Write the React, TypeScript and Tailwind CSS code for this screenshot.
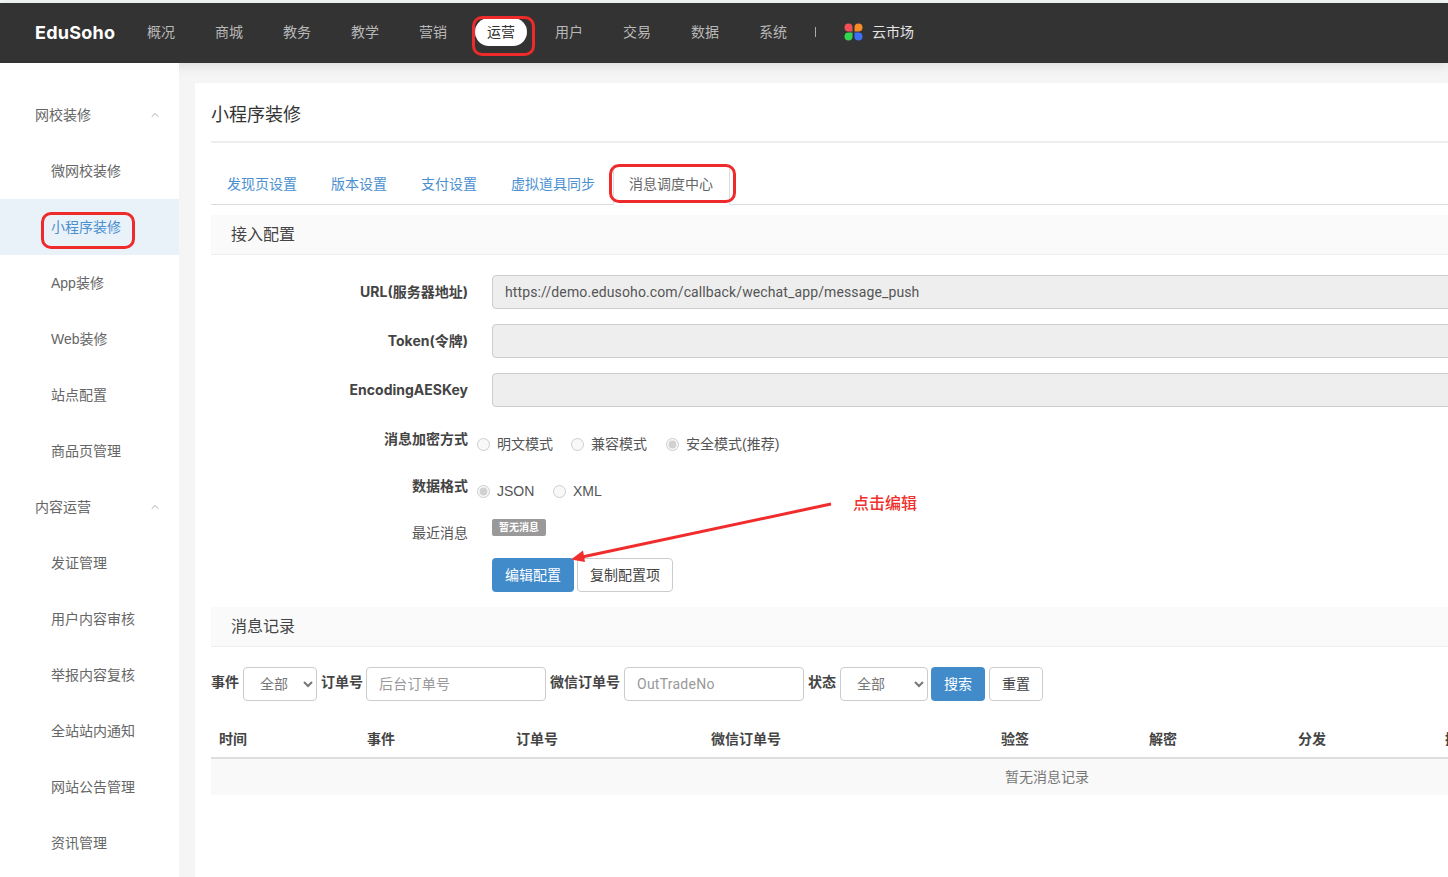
import React from 'react';
import { ChevronUp } from 'lucide-react';

const FONT = { fontFamily: '"Liberation Sans", "Noto Sans CJK SC", sans-serif' };

const navItems = ['概况', '商城', '教务', '教学', '营销', '运营', '用户', '交易', '数据', '系统'];

const sideGroups = [
  { title: '网校装修', items: ['微网校装修', '小程序装修', 'App装修', 'Web装修', '站点配置', '商品页管理'] },
  { title: '内容运营', items: ['发证管理', '用户内容审核', '举报内容复核', '全站站内通知', '网站公告管理', '资讯管理'] },
];

const tabs = ['发现页设置', '版本设置', '支付设置', '虚拟道具同步'];

const TopNav: React.FC = () => (
  <header className="flex h-[60px] items-center bg-[#333333] pb-[2px] pl-[35px] shadow-[0_2px_12px_rgba(0,0,0,0.12)]">
    <span className="w-[92px] font-['Inter',sans-serif] text-[18px] font-bold tracking-[0.25px] text-white">EduSoho</span>
    <nav className="flex items-center">
      {navItems.map((item) => (
        <span
          key={item}
          className={
            item === '运营'
              ? 'mx-[8px] flex h-[28px] w-[52px] items-center justify-center rounded-full bg-white text-[14px] text-[#333333]'
              : 'mx-[8px] flex h-[28px] w-[52px] items-center justify-center text-[14px] text-[#b8b8b8]'
          }
        >
          {item}
        </span>
      ))}
    </nav>
    <span className="ml-[8px] h-[10px] w-px bg-[#aaaaaa]" />
    <svg className="ml-[28px]" width="19" height="18" viewBox="0 0 19 18">
      <path d="M4.5 0.5a4 4 0 0 1 4 4v4h-4a4 4 0 0 1 0-8z" fill="#f25057" />
      <path d="M14.5 0.5a4 4 0 0 1 0 8h-4v-4a4 4 0 0 1 4-4z" fill="#f58c25" />
      <path d="M4.5 9.5h4v4a4 4 0 1 1-4-4z" fill="#33d44f" />
      <path d="M10.5 9.5h4a4 4 0 1 1-4 4z" fill="#3f6ff5" />
    </svg>
    <span className="ml-[9px] text-[14px] text-[#e4e4e4]">云市场</span>
  </header>
);

const Sidebar: React.FC = () => (
  <aside className="w-[179px] shrink-0 bg-white pt-[24px]">
    {sideGroups.map((group) => (
      <div key={group.title}>
        <div className="flex h-[56px] items-center justify-between pl-[35px] pr-[18px] text-[14px] text-[#666666]">
          {group.title}
          <ChevronUp size={12} className="text-[#aaaaaa]" />
        </div>
        {group.items.map((item) => (
          <div
            key={item}
            className={
              item === '小程序装修'
                ? 'flex h-[56px] items-center bg-[#eaf2f9] pl-[51px] text-[14px] text-[#4a90d0]'
                : 'flex h-[56px] items-center pl-[51px] text-[14px] text-[#666666]'
            }
          >
            {item}
          </div>
        ))}
      </div>
    ))}
  </aside>
);

const SectionBar: React.FC<{ title: string }> = ({ title }) => (
  <div className="flex h-[40px] items-center border-b border-[#eeeeee] bg-[#fafafa] pl-[20px] text-[16px] text-[#444444]">
    {title}
  </div>
);

const FormRow: React.FC<{ label: string; value?: string }> = ({ label, value }) => (
  <div className="mb-[15px] flex items-center">
    <label className="w-[257px] shrink-0 pb-[2px] text-right font-['Inter','Noto_Sans_CJK_SC',sans-serif] text-[14px] font-bold text-[#444444]">
      {label}
    </label>
    <div className="ml-[24px] flex h-[34px] flex-1 items-center rounded-[4px] border border-[#cccccc] bg-[#eeeeee] px-[12px] font-['Roboto',sans-serif] text-[14px] tracking-[0.12px] text-[#555555]">
      {value}
    </div>
  </div>
);

const Radio: React.FC<{ label: string; name: string; checked?: boolean; width: string }> = ({ label, name, checked, width }) => (
  <span className={`flex items-center text-[14px] text-[#555555] ${width}`}>
    <input type="radio" name={name} disabled defaultChecked={checked} className="m-0 h-[13px] w-[13px]" />
    <span className="ml-[7px]">{label}</span>
  </span>
);

const FilterLabel: React.FC<{ text: string }> = ({ text }) => (
  <span className="mb-[4px] text-[14px] font-bold text-[#444444]">{text}</span>
);

const FilterSelect: React.FC<{ width: string }> = ({ width }) => (
  <select className={`h-[34px] rounded-[4px] border border-[#cccccc] bg-white pl-[12px] text-[14px] text-[#777777] ${width}`}>
    <option>全部</option>
  </select>
);

const FilterInput: React.FC<{ placeholder: string }> = ({ placeholder }) => (
  <input
    placeholder={placeholder}
    className="h-[34px] w-[180px] rounded-[4px] border border-[#cccccc] bg-white px-[12px] font-['Roboto','Noto_Sans_CJK_SC',sans-serif] text-[14px] tracking-[0.25px] text-[#555555] placeholder:text-[#999999]"
  />
);

const columns = ['时间', '事件', '订单号', '微信订单号', '验签', '解密', '分发', '操作'];

const App: React.FC = () => (
  <div className="relative h-[877px] w-[1448px] overflow-hidden bg-[#f5f5f5]" style={FONT}>
    <div className="h-[3px] bg-[#f4f8f8]" />
    <TopNav />
    <div className="flex">
      <Sidebar />
      <main className="ml-[16px] mt-[20px] h-[794px] w-[1704px] shrink-0 bg-white px-[16px]">
        <h1 className="flex h-[60px] items-center border-b-2 border-[#eeeeee] pt-[6px] text-[18px] font-normal text-[#333333]">
          小程序装修
        </h1>
        <div className="mt-[22px] flex h-[40px] border-b border-[#dddddd] text-[14px] text-[#4a90d0]">
          {tabs.map((t) => (
            <span key={t} className="mr-[2px] flex items-center px-[16px]">
              {t}
            </span>
          ))}
          <span className="flex h-[40px] items-center border border-b-white border-[#dddddd] bg-white pb-[2px] pl-[15px] pr-[16px] text-[#666666]">
            消息调度中心
          </span>
        </div>
        <div className="mt-[10px]">
          <SectionBar title="接入配置" />
        </div>
        <div className="pt-[20px]">
          <FormRow label="URL(服务器地址)" value="https://demo.edusoho.com/callback/wechat_app/message_push" />
          <FormRow label="Token(令牌)" />
          <FormRow label="EncodingAESKey" />
          <div className="mt-[22px] flex h-[27px] items-start">
            <label className="w-[257px] shrink-0 text-right text-[14px] font-bold text-[#444444]">消息加密方式</label>
            <div className="ml-[9px] mt-[5px] flex">
              <Radio name="encrypt" label="明文模式" width="w-[94px]" />
              <Radio name="encrypt" label="兼容模式" width="w-[95px]" />
              <Radio name="encrypt" label="安全模式(推荐)" checked width="w-[130px]" />
            </div>
          </div>
          <div className="mt-[20px] flex h-[27px] items-start">
            <label className="w-[257px] shrink-0 text-right text-[14px] font-bold text-[#444444]">数据格式</label>
            <div className="ml-[9px] mt-[5px] flex">
              <Radio name="format" label="JSON" checked width="w-[76px]" />
              <Radio name="format" label="XML" width="w-[60px]" />
            </div>
          </div>
          <div className="mt-[16px] flex h-[27px] items-start">
            <label className="mt-[4px] w-[257px] shrink-0 text-right text-[14px] text-[#555555]">最近消息</label>
            <span className="ml-[24px] flex h-[17px] w-[54px] items-center justify-center rounded-[2px] bg-[#999999] text-[10px] font-bold text-white">
              暂无消息
            </span>
          </div>
          <div className="ml-[281px] mt-[12px] flex gap-[3px]">
            <button className="h-[34px] w-[82px] rounded-[4px] bg-[#428bca] text-[14px] text-white">编辑配置</button>
            <button className="h-[34px] w-[96px] rounded-[4px] border border-[#cccccc] bg-white text-[14px] text-[#444444]">
              复制配置项
            </button>
          </div>
        </div>
        <div className="mt-[15px]">
          <SectionBar title="消息记录" />
        </div>
        <div className="mt-[20px] flex items-center gap-[4px]">
          <FilterLabel text="事件" />
          <FilterSelect width="w-[74px]" />
          <FilterLabel text="订单号" />
          <span className="ml-[-1px]">
            <FilterInput placeholder="后台订单号" />
          </span>
          <FilterLabel text="微信订单号" />
          <FilterInput placeholder="OutTradeNo" />
          <FilterLabel text="状态" />
          <FilterSelect width="w-[88px]" />
          <button className="ml-[-1px] h-[34px] w-[54px] rounded-[4px] bg-[#428bca] text-[14px] text-white">搜索</button>
          <button className="h-[34px] w-[54px] rounded-[4px] border border-[#cccccc] bg-white text-[14px] text-[#444444]">
            重置
          </button>
        </div>
        <div className="mt-[21px]">
          <div className="grid h-[37px] grid-cols-[148px_149px_195px_290px_148px_149px_147px_1fr] items-center border-b-2 border-[#dddddd] text-[14px] font-bold text-[#444444]">
            {columns.map((c) => (
              <span key={c} className="pl-[8px]">
                {c}
              </span>
            ))}
          </div>
          <div className="flex h-[36px] items-center justify-center bg-[#f9f9f9] text-[14px] text-[#777777]">暂无消息记录</div>
        </div>
      </main>
    </div>

    {/* red annotations laid over the screenshot */}
    <div className="absolute left-[472px] top-[16px] h-[40px] w-[63px] rounded-[10px] border-[3px] border-[#ee2a2a]" />
    <div className="absolute left-[41px] top-[212px] h-[37px] w-[94px] rounded-[10px] border-[3px] border-[#ee2a2a]" />
    <div className="absolute left-[609px] top-[164px] h-[39px] w-[127px] rounded-[10px] border-[3px] border-[#ee2a2a]" />
    <svg className="absolute left-[560px] top-[495px]" width="280" height="75" viewBox="0 0 280 75">
      <line x1="271" y1="9" x2="22" y2="62" stroke="#f02c2c" strokeWidth="3" />
      <path d="M11 64.5 L23 55.5 L25 67 Z" fill="#f02c2c" />
    </svg>
    <span className="absolute left-[853px] top-[492px] text-[16px] font-medium text-[#f0302c]">点击编辑</span>
  </div>
);

export default App;
